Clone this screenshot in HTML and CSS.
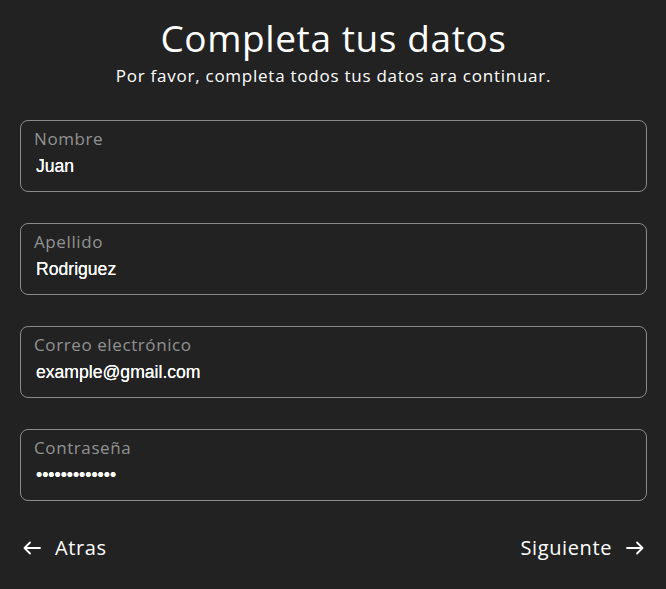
FILE: index.html
```html
<!DOCTYPE html>
<html lang="es">
<head>
<meta charset="utf-8">
<title>Completa tus datos</title>
<link rel="stylesheet" href="styles.css">
</head>
<body>
<main class="page">
  <header class="head">
    <h1 class="title">Completa tus datos</h1>
    <p class="subtitle">Por favor, completa todos tus datos ara continuar.</p>
  </header>
  <form class="form">
    <label class="field">
      <span class="field-label">Nombre</span>
      <input class="field-input" type="text" value="Juan">
    </label>
    <label class="field">
      <span class="field-label">Apellido</span>
      <input class="field-input" type="text" value="Rodriguez">
    </label>
    <label class="field">
      <span class="field-label">Correo electrónico</span>
      <input class="field-input" type="email" value="example@gmail.com">
    </label>
    <label class="field">
      <span class="field-label">Contraseña</span>
      <input class="field-input" type="password" value="abcdefghijklm">
    </label>
  </form>
  <nav class="actions">
    <button class="btn" type="button">
      <svg class="arrow" width="18" height="14" viewBox="0 0 18 14" fill="none" stroke="#fff" stroke-width="1.8" stroke-linecap="round" stroke-linejoin="round"><path d="M17 7H1.5M7 1.5L1.5 7L7 12.5"/></svg>
      <span>Atras</span>
    </button>
    <button class="btn" type="button">
      <span>Siguiente</span>
      <svg class="arrow" width="18" height="14" viewBox="0 0 18 14" fill="none" stroke="#fff" stroke-width="1.8" stroke-linecap="round" stroke-linejoin="round"><path d="M1 7H16.5M11 1.5L16.5 7L11 12.5"/></svg>
    </button>
  </nav>
</main>
</body>
</html>
```
FILE: styles.css
```css
html, body {
  margin: 0;
  padding: 0;
  background: #222222;
}
.page {
  padding: 14px 19px 0 20px;
  font-family: "Open Sans", "Liberation Sans", sans-serif;
  color: #fff;
}
.head {
  text-align: center;
}
.title {
  margin: 0;
  font-size: 37px;
  font-weight: 500;
  line-height: 48px;
  letter-spacing: 0.6px;
}
.subtitle {
  margin: 2px 0 0;
  font-size: 17px;
  line-height: 24px;
  letter-spacing: 0.75px;
}
.form {
  margin-top: 32px;
  display: flex;
  flex-direction: column;
  gap: 31px;
}
.field {
  display: flex;
  flex-direction: column;
  height: 72px;
  box-sizing: border-box;
  border: 1px solid #8a8a8a;
  border-radius: 8px;
  padding: 6px 13px 0 13px;
}
.field-label {
  font-size: 17px;
  line-height: 24px;
  color: #929292;
  font-weight: 400;
  letter-spacing: 0.6px;
}
.field-input {
  margin: 4px 0 0 2px;
  padding: 0;
  border: 0;
  background: transparent;
  color: #fff;
  font-family: "Liberation Sans", Arial, sans-serif;
  font-size: 17.6px;
  line-height: 22px;
  outline: none;
  text-shadow: 0 0 0.4px #fff;
}
.actions {
  margin-top: 33px;
  display: flex;
  justify-content: space-between;
  align-items: center;
}
.btn {
  display: flex;
  align-items: center;
  gap: 14px;
  background: none;
  border: 0;
  padding: 0 3px;
  color: #fff;
  font-family: "Open Sans", "Liberation Sans", sans-serif;
  font-size: 20px;
  letter-spacing: 0.6px;
  cursor: pointer;
}
.arrow {
  display: block;
}
```
